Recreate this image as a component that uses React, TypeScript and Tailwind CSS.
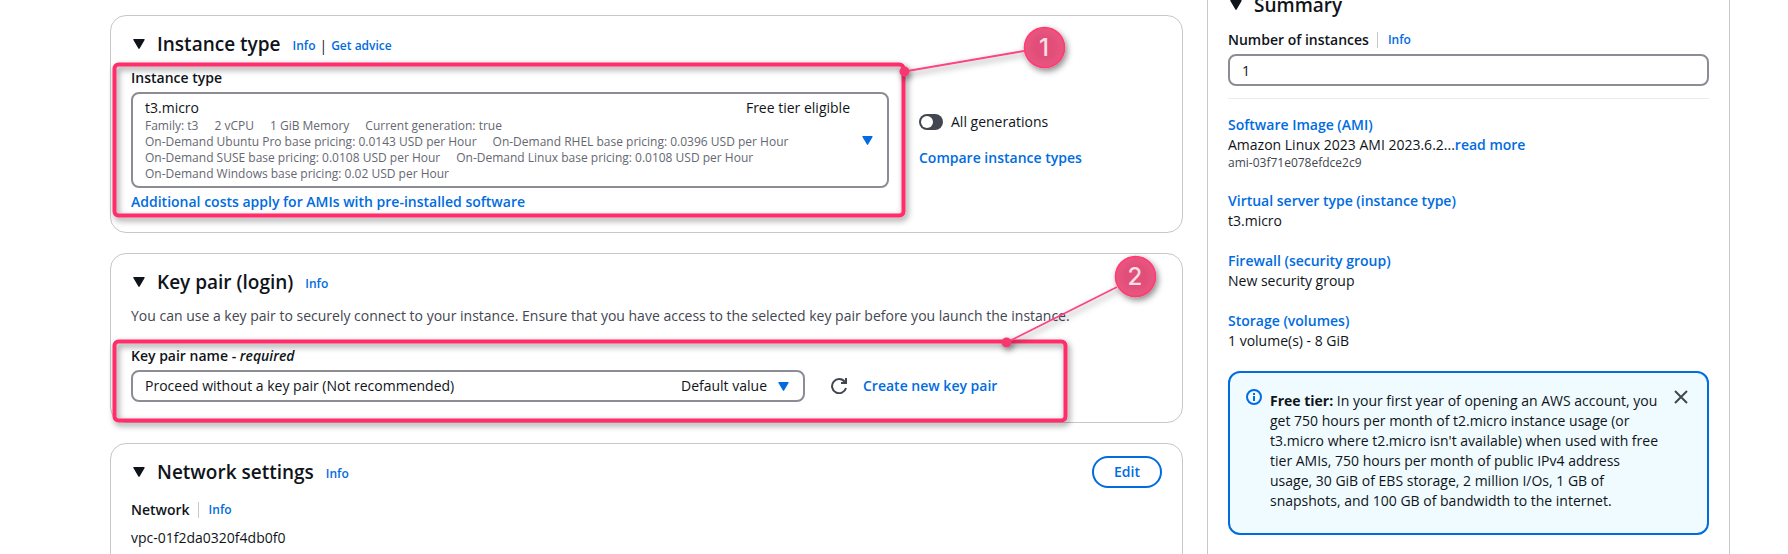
import { useState, type ReactNode } from "react";

const linkText = "text-[#006ce0] font-semibold";

function Caret({ className }: { className: string }) {
  return (
    <svg viewBox="0 0 12 10" className={className} aria-hidden="true">
      <path d="M1 0.7h10L6 9.2z" fill="currentColor" stroke="currentColor" strokeWidth="1.4" strokeLinejoin="round" />
    </svg>
  );
}

function SmallLink({ children }: { children: ReactNode }) {
  return (
    <a href="#info" className={`text-xs leading-4 ${linkText}`}>
      {children}
    </a>
  );
}

function CardHeader({ title, children }: { title: string; children?: ReactNode }) {
  return (
    <div className="flex h-6 items-center">
      <button type="button" aria-expanded="true" className="flex items-center gap-3 pl-0.5">
        <Caret className="h-[10px] w-3" />
        <h2 className="text-[19px] leading-6 font-semibold">{title}</h2>
      </button>
      {children && <span className="ml-3 flex items-center gap-1 pt-1">{children}</span>}
    </div>
  );
}

function Card({ children, className = "" }: { children: ReactNode; className?: string }) {
  return (
    <section className={`rounded-2xl border border-[#c6c6cd] bg-white px-5 ${className}`}>{children}</section>
  );
}

function InstanceTypeCard() {
  const [allGenerations, setAllGenerations] = useState(false);
  return (
    <Card className="pt-4 pb-5">
      <CardHeader title="Instance type">
        <SmallLink>Info</SmallLink>
        <span className="text-sm leading-4">|</span>
        <SmallLink>Get advice</SmallLink>
      </CardHeader>
      <div className="mt-3 grid grid-cols-[758fr_243fr] items-center gap-[30px]">
        <div className="flex flex-col items-start gap-1">
          <label htmlFor="instance-type" className="leading-5 font-semibold">
            Instance type
          </label>
          <div className="relative flex w-full items-center rounded-lg border-2 border-[#8c8c94] py-1 pr-[14px] pl-3">
            <div className="min-w-0 flex-1">
              <div className="flex justify-between pr-3 leading-5">
                <span>t3.micro</span>
                <span>Free tier eligible</span>
              </div>
              <div className="text-xs leading-4 text-[#656871]">
                <div className="flex gap-4">
                  <span>Family: t3</span>
                  <span>2 vCPU</span>
                  <span>1 GiB Memory</span>
                  <span>Current generation: true</span>
                </div>
                <div className="flex gap-4">
                  <span>On-Demand Ubuntu Pro base pricing: 0.0143 USD per Hour</span>
                  <span>On-Demand RHEL base pricing: 0.0396 USD per Hour</span>
                </div>
                <div className="flex gap-4">
                  <span>On-Demand SUSE base pricing: 0.0108 USD per Hour</span>
                  <span>On-Demand Linux base pricing: 0.0108 USD per Hour</span>
                </div>
                <div>On-Demand Windows base pricing: 0.02 USD per Hour</div>
              </div>
            </div>
            <Caret className="h-[9px] w-[11px] text-[#006ce0]" />
            <select id="instance-type" className="absolute inset-0 h-full w-full cursor-pointer opacity-0">
              <option>t3.micro</option>
            </select>
          </div>
          <a href="#costs" className={`leading-5 ${linkText}`}>
            Additional costs apply for AMIs with pre-installed software
          </a>
        </div>
        <div className="flex flex-col items-start gap-4">
          <label className="flex items-center gap-2 leading-5">
            <input
              type="checkbox"
              role="switch"
              checked={allGenerations}
              onChange={(e) => setAllGenerations(e.target.checked)}
              className="peer sr-only"
            />
            <span className="flex h-4 w-6 items-center rounded-full bg-[#424650] px-0.5 peer-checked:justify-end peer-checked:bg-[#006ce0]">
              <span className="h-3 w-3 rounded-full bg-white" />
            </span>
            All generations
          </label>
          <a href="#compare" className={`leading-5 ${linkText}`}>
            Compare instance types
          </a>
        </div>
      </div>
    </Card>
  );
}

function KeyPairCard() {
  return (
    <Card className="pt-4 pb-5">
      <CardHeader title="Key pair (login)">
        <SmallLink>Info</SmallLink>
      </CardHeader>
      <p className="mt-3 leading-5 text-[#424650]">
        You can use a key pair to securely connect to your instance. Ensure that you have access to the selected key
        pair before you launch the instance.
      </p>
      <label htmlFor="key-pair" className="mt-5 mb-1 block leading-5 font-semibold">
        Key pair name - <em>required</em>
      </label>
      <div className="grid grid-cols-[674fr_331fr] items-center gap-[26px]">
        <div className="relative">
          <select
            id="key-pair"
            className="block h-8 w-full appearance-none rounded-lg border-2 border-[#8c8c94] bg-white pr-36 pl-3"
          >
            <option>Proceed without a key pair (Not recommended)</option>
          </select>
          <span className="pointer-events-none absolute inset-y-0 right-4 flex items-center gap-[11px]">
            Default value
            <Caret className="h-[9px] w-[11px] text-[#006ce0]" />
          </span>
        </div>
        <div className="flex items-center gap-4">
          <button type="button" aria-label="Refresh key pairs" className="text-[#424650]">
            <svg viewBox="0 0 16 16" className="h-4 w-4" fill="none" stroke="currentColor" strokeWidth="2">
              <path d="M15 10a7.1 7.1 0 1 1-1.2-6.2L15 5" />
              <path d="M15 0v5h-5" />
            </svg>
          </button>
          <a href="#create" className={`leading-5 ${linkText}`}>
            Create new key pair
          </a>
        </div>
      </div>
    </Card>
  );
}

function NetworkCard() {
  return (
    <Card className="pt-3 pb-24">
      <div className="flex items-center justify-between">
        <CardHeader title="Network settings">
          <SmallLink>Info</SmallLink>
        </CardHeader>
        <button type="button" className={`h-8 rounded-full border-2 border-[#006ce0] px-5 ${linkText}`}>
          Edit
        </button>
      </div>
      <div className="mt-3 flex items-center leading-5">
        <span className="font-semibold">Network</span>
        <span className="mr-[10px] ml-2 h-4 border-l border-[#c6c6cd]" />
        <SmallLink>Info</SmallLink>
      </div>
      <p className="mt-2 leading-5">vpc-01f2da0320f4db0f0</p>
    </Card>
  );
}

function SummaryItem({ title, children }: { title: string; children: ReactNode }) {
  return (
    <div className="leading-5">
      <a href="#section" className={linkText}>
        {title}
      </a>
      <div>{children}</div>
    </div>
  );
}

function Summary() {
  const [open, setOpen] = useState(true);
  return (
    <aside className="min-h-screen border-x border-[#c6c6cd] px-5">
      <div className="-mt-[7px]">
        <CardHeader title="Summary" />
      </div>
      <div className="mt-[13px] flex items-center leading-5">
        <label htmlFor="instances" className="font-semibold">
          Number of instances
        </label>
        <span className="mr-[10px] ml-2 h-4 border-l border-[#c6c6cd]" />
        <SmallLink>Info</SmallLink>
      </div>
      <input
        id="instances"
        inputMode="numeric"
        defaultValue="1"
        className="mt-1 block h-8 w-full rounded-lg border-2 border-[#8c8c94] px-3"
      />
      <hr className="mt-3 mb-4 border-[#ebebf0]" />
      <div className="flex flex-col gap-5">
        <SummaryItem title="Software Image (AMI)">
          Amazon Linux 2023 AMI 2023.6.2...
          <a href="#more" className={linkText}>
            read more
          </a>
          <div className="text-xs leading-4 text-[#424650]">ami-03f71e078efdce2c9</div>
        </SummaryItem>
        <SummaryItem title="Virtual server type (instance type)">t3.micro</SummaryItem>
        <SummaryItem title="Firewall (security group)">New security group</SummaryItem>
        <SummaryItem title="Storage (volumes)">1 volume(s) - 8 GiB</SummaryItem>
        {open && (
          <div className="flex items-start rounded-xl border-2 border-[#006ce0] bg-[#f0fbff] px-4 pt-4 pb-[22px]">
            <svg viewBox="0 0 16 16" className="mr-2 h-4 w-4 shrink-0 text-[#006ce0]" fill="none" stroke="currentColor" strokeWidth="2" aria-hidden="true">
              <circle cx="8" cy="8" r="7" />
              <path d="M8 4v2M8 7v5" />
            </svg>
            <p className="mt-0.5 max-w-[392px] min-w-0 flex-1 leading-5">
              <b>Free tier:</b> In your first year of opening an AWS account, you get 750 hours per month of t2.micro
              instance usage (or t3.micro where t2.micro isn't available) when used with free tier AMIs, 750 hours per
              month of public IPv4 address usage, 30 GiB of EBS storage, 2 million I/Os, 1 GB of snapshots, and 100 GB
              of bandwidth to the internet.
            </p>
            <button type="button" aria-label="Dismiss" onClick={() => setOpen(false)} className="ml-auto pr-0.5 text-[#424650]">
              <svg viewBox="0 0 16 16" className="h-4 w-4" fill="none" stroke="currentColor" strokeWidth="2">
                <path d="M2 2l12 12M14 2L2 14" />
              </svg>
            </button>
          </div>
        )}
      </div>
    </aside>
  );
}

function Callouts() {
  return (
    <svg
      width="1788"
      height="554"
      viewBox="0 0 1788 554"
      className="pointer-events-none absolute top-0 left-0"
      fill="none"
    >
      <defs>
        <filter id="shadow" filterUnits="userSpaceOnUse" x="90" y="0" width="1110" height="460">
          <feDropShadow dx="2" dy="3" stdDeviation="3" floodColor="#000" floodOpacity="0.45" />
        </filter>
        <radialGradient id="badge">
          <stop offset="0.5" stopColor="#e14f79" />
          <stop offset="1" stopColor="#ea5580" />
        </radialGradient>
      </defs>
      <g filter="url(#shadow)" stroke="#ff2d6b" strokeWidth="4">
        <rect x="114.5" y="64.5" width="789" height="151" rx="4" />
        <rect x="114.5" y="341.5" width="951" height="79" rx="4" />
      </g>
      <g filter="url(#shadow)">
        <path d="M904.5 71.5L1024 51M1006.5 342.5L1117 287" stroke="#fa4580" strokeWidth="1.8" />
        <circle cx="904.5" cy="71.5" r="5" fill="#f7396f" />
        <circle cx="1006.5" cy="342.5" r="5" fill="#f7396f" />
        <circle cx="1044.5" cy="47.5" r="20" fill="url(#badge)" stroke="#ff3b76" strokeWidth="1.6" />
        <circle cx="1135.5" cy="276.5" r="20" fill="url(#badge)" stroke="#ff3b76" strokeWidth="1.6" />
      </g>
      <g fill="#fbdfe7" fontSize="24" fontWeight="500" textAnchor="middle" className="font-['Inter',sans-serif]">
        <text x="1044" y="56">1</text>
        <text x="1135" y="285">2</text>
      </g>
    </svg>
  );
}

export default function App() {
  return (
    <div className="relative h-screen overflow-hidden bg-white pr-[58px] pl-[110px] font-['Open_Sans',sans-serif] text-sm text-[#0f141a]">
      <div className="grid grid-cols-[1073fr_523fr] items-start gap-6">
        <main className="flex flex-col gap-5 pt-[15px]">
          <InstanceTypeCard />
          <KeyPairCard />
          <NetworkCard />
        </main>
        <Summary />
      </div>
      <Callouts />
    </div>
  );
}
